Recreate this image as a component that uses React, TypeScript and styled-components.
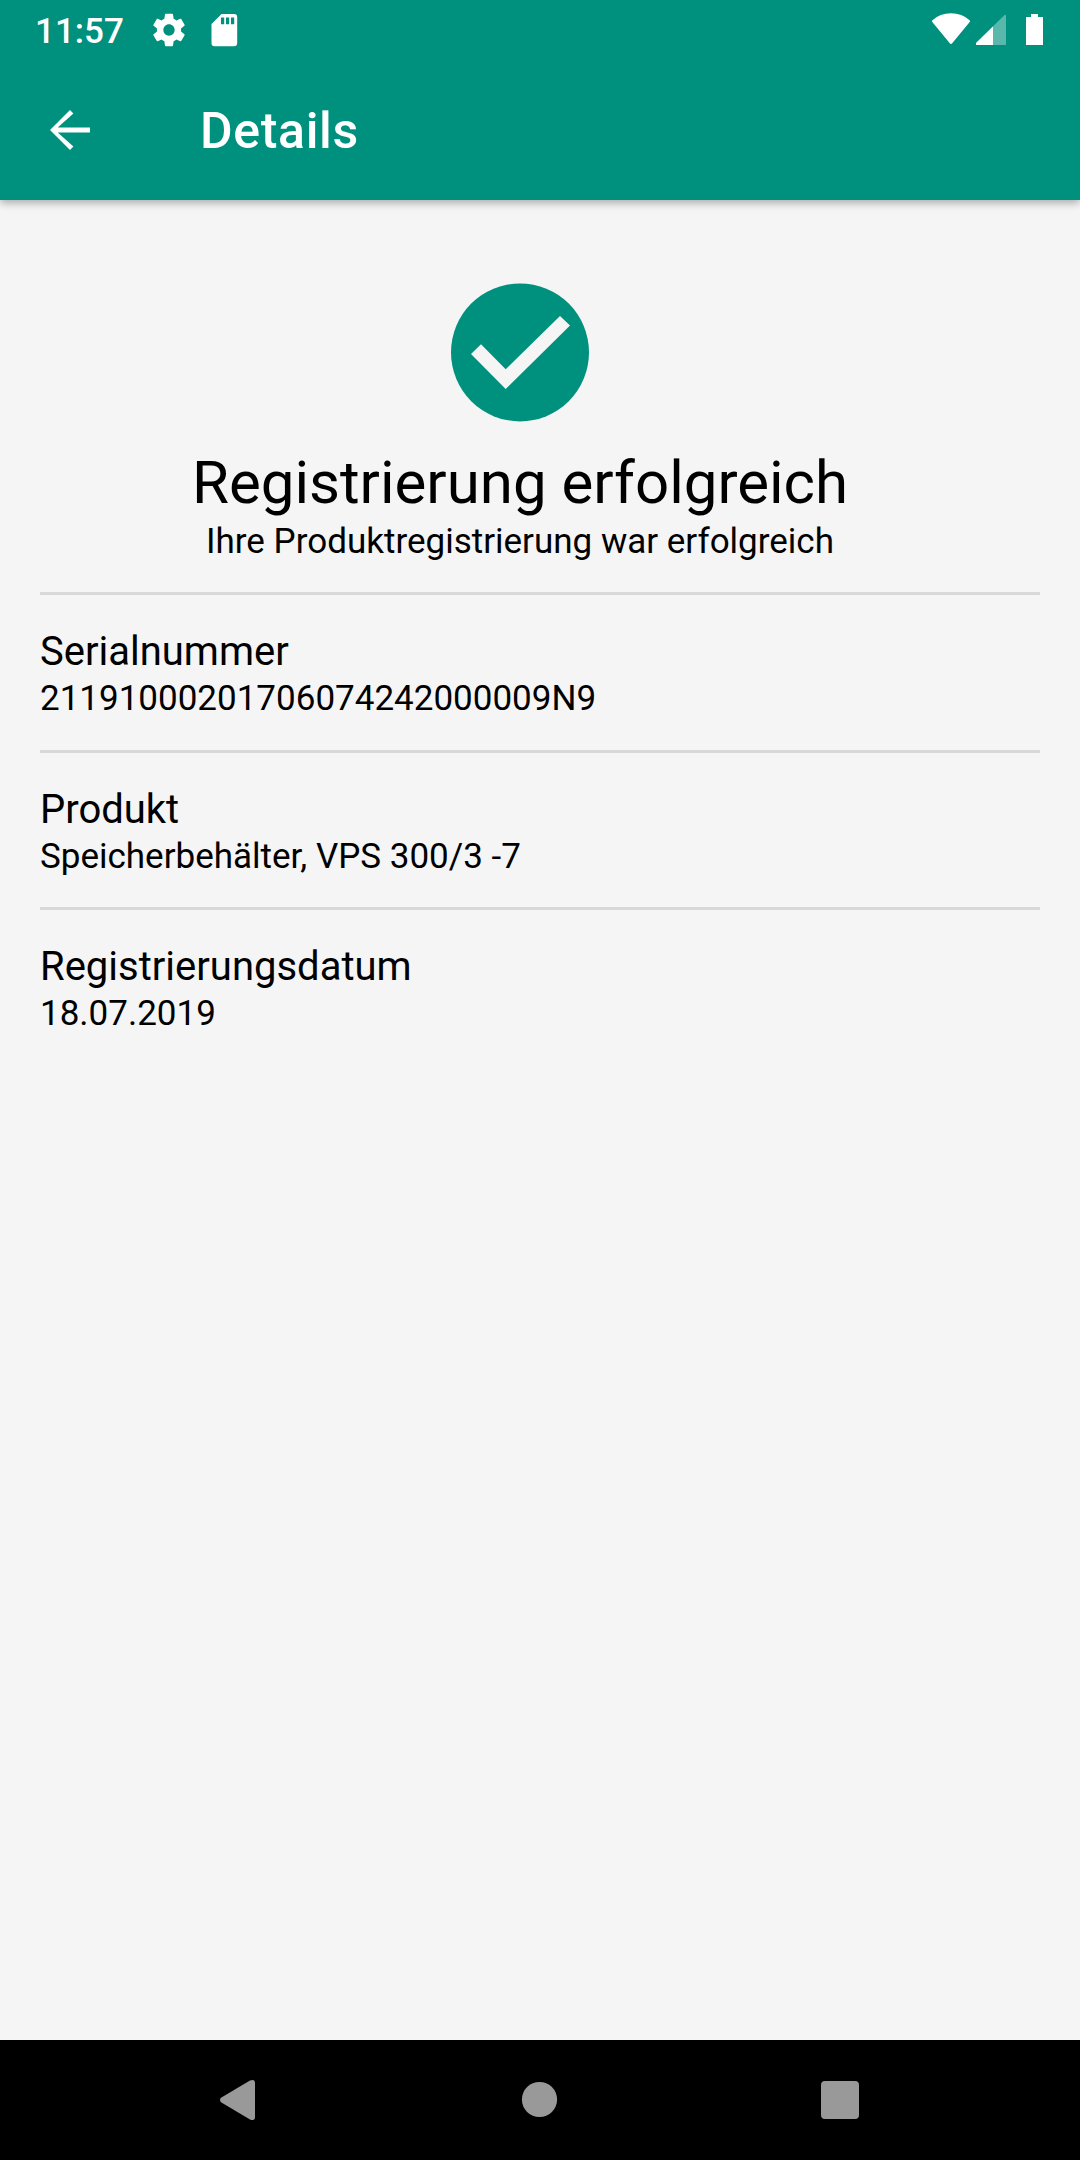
import React from "react";
import styled, { createGlobalStyle } from "styled-components";

const GREEN = "#00917e";

const GlobalStyle = createGlobalStyle`
  * { box-sizing: border-box; }
  body { margin: 0; background: #f5f5f5; }
`;

const Screen = styled.div`
  display: flex;
  flex-direction: column;
  width: 1080px;
  height: 2160px;
  background: #f5f5f5;
  color: #000;
  font-family: Roboto, "Noto Sans", sans-serif;
`;

const Header = styled.header`
  flex: none;
  background: ${GREEN};
  color: #fff;
  box-shadow: 0 3px 8px rgba(0, 0, 0, 0.3);
`;

const StatusBar = styled.div`
  display: flex;
  justify-content: space-between;
  height: 63px;
  padding: 0 36px 0 35px;
`;

const StatusGroup = styled.div`
  display: flex;
  align-items: center;
  height: 60px;
`;

const Clock = styled.span`
  width: 114px;
  padding-top: 3px;
  font-size: 35px;
  line-height: 41px;
  font-weight: 500;
`;

const Toolbar = styled.div`
  display: flex;
  align-items: center;
  height: 134px;
  padding-left: 38px;
  margin-bottom: 3px;
`;

const BackButton = styled.button`
  display: flex;
  padding: 0;
  margin-right: 98px;
  border: 0;
  background: none;
  color: inherit;
`;

const Title = styled.h1`
  margin: 0;
  padding-top: 2px;
  font-size: 50px;
  line-height: 60px;
  font-weight: 500;
  letter-spacing: 0.65px;
`;

const Content = styled.main`
  flex: 1;
  padding: 83px 40px 0;
`;

const Hero = styled.section`
  display: flex;
  flex-direction: column;
  align-items: center;
  height: 309px;
  padding-right: 40px;
`;

const HeroTitle = styled.h2`
  margin: 26px 0 0;
  font-size: 60px;
  line-height: 70px;
  font-weight: 400;
  white-space: nowrap;
`;

const HeroText = styled.p`
  margin: 3px 0 0;
  font-size: 35px;
  line-height: 41px;
  white-space: nowrap;
`;

const Details = styled.dl`
  margin: 0;
`;

const Entry = styled.div`
  height: 157.5px;
  padding-top: 33px;
  border-top: 3px solid #d8d8d8;
`;

const Label = styled.dt`
  font-size: 40px;
  line-height: 47px;
`;

const Value = styled.dd`
  margin: 3px 0 0;
  font-size: 35px;
  line-height: 41px;
`;

const NavBar = styled.nav`
  display: flex;
  align-items: center;
  flex: none;
  height: 120px;
  padding-left: 210px;
  background: #000;
`;

const NavButton = styled.button<{ $width: number }>`
  display: flex;
  justify-content: center;
  width: ${(p) => p.$width}px;
  padding: 0;
  border: 0;
  margin-right: ${(p) => 300 - p.$width}px;
  background: none;
`;

const Icon = styled.svg<{ $gap?: number }>`
  display: block;
  flex: none;
  margin-left: ${(p) => p.$gap ?? 0}px;
`;

const entries = [
  { label: "Serialnummer", value: "21191000201706074242000009N9" },
  { label: "Produkt", value: "Speicherbehälter, VPS 300/3 -7" },
  { label: "Registrierungsdatum", value: "18.07.2019" },
];

export default function App() {
  return (
    <Screen>
      <GlobalStyle />
      <Header>
        <StatusBar>
          <StatusGroup>
            <Clock>11:57</Clock>
            <Icon width="40" height="40" viewBox="-.4 -.4 24.8 24.8" fill="#fff">
              <path d="M19.43 12.98c.04-.32.07-.64.07-.98s-.03-.66-.07-.98l2.11-1.65c.19-.15.24-.42.12-.64l-2-3.46c-.12-.22-.39-.3-.61-.22l-2.49 1c-.52-.4-1.08-.73-1.69-.98l-.38-2.65C14.46 2.18 14.25 2 14 2h-4c-.25 0-.46.18-.49.42l-.38 2.65c-.61.25-1.17.59-1.69.98l-2.49-1c-.23-.09-.49 0-.61.22l-2 3.46c-.13.22-.07.49.12.64l2.11 1.65c-.04.32-.07.65-.07.98s.03.66.07.98l-2.11 1.65c-.19.15-.24.42-.12.64l2 3.46c.12.22.39.3.61.22l2.49-1c.52.4 1.08.73 1.69.98l.38 2.65c.03.24.24.42.49.42h4c.25 0 .46-.18.49-.42l.38-2.65c.61-.25 1.17-.59 1.69-.98l2.49 1c.23.09.49 0 .61-.22l2-3.46c.12-.22.07-.49-.12-.64l-2.11-1.65zM12 15.5c-1.93 0-3.5-1.57-3.5-3.5s1.57-3.5 3.5-3.5 3.5 1.57 3.5 3.5-1.57 3.5-3.5 3.5z" />
            </Icon>
            <Icon $gap={15} width="40" height="40" viewBox="204 10 40 40" fill="#fff">
              <path
                fillRule="evenodd"
                d="M221.5 14 H234 Q237.2 14 237.2 17.2 V43 Q237.2 46.2 234 46.2 H214.7 Q211.5 46.2 211.5 43 V24 Z M221 17.6 V24.2 H224.2 V17.6Z M226 17.6 V24.2 H229.2 V17.6Z M231 17.6 V24.2 H234.2 V17.6Z"
              />
            </Icon>
          </StatusGroup>
          <StatusGroup>
            <Icon width="40" height="36" viewBox="0 0 40 36" fill="#fff">
              <path d="M1.4 8.2 Q9 1.2 20 1.2 T38.6 8.2 Q39.5 9 38.7 10 L21.2 31.3 Q20 32.6 18.8 31.3 L1.3 10 Q.5 9 1.4 8.2Z" />
            </Icon>
            <Icon $gap={5} width="31" height="32" viewBox="0 0 31 32" fill="#fff">
              <path d="M0 31 V29 L28 1.4 Q30 0 30 2 V31Z" opacity=".35" />
              <path d="M0 31 V29 L17 12.4 V31Z" />
            </Icon>
            <Icon $gap={18} width="19" height="32" viewBox="0 0 19 32" fill="#fff">
              <path d="M1 3 H6 V0 H13 V3 H18 V31 H1Z" />
            </Icon>
          </StatusGroup>
        </StatusBar>
        <Toolbar>
          <BackButton aria-label="Zurück">
            <Icon width="64" height="60" viewBox="0 0 64 60" fill="#fff">
              <path d="M52 27.5 V32.5 H19.7 L35.4 46.6 L32 50 L12 30 L32 10 L35.4 13.5 L19.7 27.5Z" />
            </Icon>
          </BackButton>
          <Title>Details</Title>
        </Toolbar>
      </Header>
      <Content>
        <Hero>
          <Icon width="138" height="139" viewBox="451 283 138 139">
            <circle cx="520" cy="352.4" r="69" fill={GREEN} />
            <path d="M471 354 L481 344.3 L505.7 369.3 L560 316 L570 325.6 L505.7 389Z" fill="#f5f5f5" />
          </Icon>
          <HeroTitle>Registrierung erfolgreich</HeroTitle>
          <HeroText>Ihre Produktregistrierung war erfolgreich</HeroText>
        </Hero>
        <Details>
          {entries.map((e) => (
            <Entry key={e.label}>
              <Label>{e.label}</Label>
              <Value>{e.value}</Value>
            </Entry>
          ))}
        </Details>
      </Content>
      <NavBar>
        <NavButton $width={60} aria-label="Zurück">
          <Icon width="60" height="60" viewBox="0 0 60 60" fill="#999">
            <path d="M11 27.8 L40 10.6 Q45 8.5 45 13 V47 Q45 51.5 40 49.4 L11 32.2 Q9 30 11 27.8Z" />
          </Icon>
        </NavButton>
        <NavButton $width={60} aria-label="Startseite">
          <Icon width="60" height="60" viewBox="0 0 60 60" fill="#999">
            <circle cx="29.5" cy="29.5" r="17.6" />
          </Icon>
        </NavButton>
        <NavButton $width={60} aria-label="Übersicht">
          <Icon width="60" height="60" viewBox="0 0 60 60" fill="#999">
            <rect x="11" y="11" width="38" height="38" rx="4" />
          </Icon>
        </NavButton>
      </NavBar>
    </Screen>
  );
}
